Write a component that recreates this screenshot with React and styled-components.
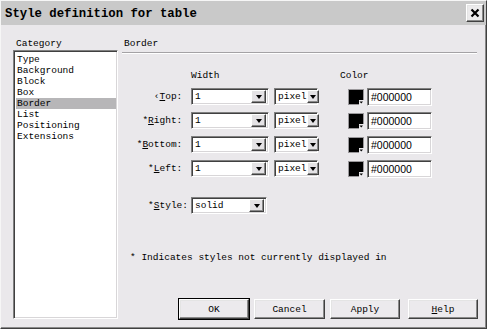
import React from "react";
import styled, { createGlobalStyle, css } from "styled-components";

const Global = createGlobalStyle`
  html, body { margin: 0; padding: 0; background: #eae8eb; }
  body { font-family: "Liberation Mono", "DejaVu Sans Mono", monospace; color: #000; }
  * { box-sizing: border-box; }
`;

const raised = css`
  border-top: 1px solid #ffffff;
  border-left: 1px solid #ffffff;
  border-right: 1px solid #404040;
  border-bottom: 1px solid #404040;
  box-shadow: inset -1px -1px #8a8a8a, inset 1px 1px #e4e4e4;
`;

const sunken = css`
  border-top: 1px solid #808080;
  border-left: 1px solid #808080;
  border-right: 1px solid #ffffff;
  border-bottom: 1px solid #ffffff;
  box-shadow: inset 1px 1px #404040, inset -1px -1px #d8d6d8;
`;

const Window = styled.div`
  width: 487px;
  height: 329px;
  display: flex;
  flex-direction: column;
  background: #eae8eb;
  border-top: 1px solid #f6f6f6;
  border-left: 1px solid #f6f6f6;
  border-right: 1px solid #404040;
  border-bottom: 1px solid #404040;
  box-shadow: inset -1px -1px #8a8a8a;
`;

const TitleBar = styled.div`
  height: 24px;
  flex: none;
  display: flex;
  align-items: center;
  justify-content: space-between;
  padding: 0 2px 0 4px;
  background: #c9c9c9;
`;

const Title = styled.span`
  font-size: 12.3px;
  font-weight: bold;
  padding-top: 1px;
`;

const CloseButton = styled.div`
  width: 18px;
  height: 18px;
  display: flex;
  align-items: center;
  justify-content: center;
  background: #ecebec;
  ${raised};
`;

const Body = styled.div`
  flex: 1;
  display: flex;
  padding: 0 8px 9px 12px;
  min-height: 0;
`;

const LeftCol = styled.div`
  width: 105px;
  display: flex;
  flex-direction: column;
`;

const HeadLabel = styled.div`
  font-size: 9.5px;
  line-height: 11px;
  height: 11px;
  margin-top: 13px;
  padding-left: ${(p) => p.$indent || 0}px;
  white-space: pre;
`;

const ListBox = styled.div`
  flex: 1;
  margin-top: 1px;
  background: #fff;
  padding: 3px 0 0 2px;
  ${sunken};
`;

const ListItem = styled.div`
  font-size: 9.5px;
  line-height: 11px;
  height: 11px;
  padding-left: 1px;
  margin-right: 1px;
  background: ${(p) => (p.$active ? "#b7b6b8" : "transparent")};
`;

const RightCol = styled.div`
  flex: 1;
  margin-left: 4px;
  display: flex;
  flex-direction: column;
`;

const Rule = styled.div`
  height: 2px;
  margin-top: 3px;
  border-top: 1px solid #a4a2a5;
  border-bottom: 1px solid #ffffff;
  margin-right: 1px;
`;

const Grid = styled.div`
  display: grid;
  grid-template-columns: 69px 83px 66px 27px 65px;
  grid-template-rows: 11px;
  grid-auto-rows: 17px;
  row-gap: 7px;
  margin-top: 16px;
  align-items: center;
`;

const ColHead = styled.div`
  font-size: 9.5px;
  line-height: 11px;
  height: 11px;
`;

const FieldLabel = styled.div`
  font-size: 9.5px;
  line-height: 11px;
  text-align: right;
  padding-right: 3px;
  white-space: pre;
  u { text-decoration: underline; text-underline-offset: 1px; }
`;

const Select = styled.div`
  width: ${(p) => p.$w}px;
  height: 17px;
  display: flex;
  align-items: center;
  justify-content: space-between;
  background: #fff;
  padding: 2px 2px 2px 3px;
  font-size: 9.5px;
  ${sunken};
`;

const DropButton = styled.div`
  width: ${(p) => p.$w}px;
  height: 13px;
  flex: none;
  display: flex;
  align-items: center;
  justify-content: center;
  background: #e4e2e5;
  ${raised};
`;

const Arrow = styled.div`
  width: 0;
  height: 0;
  border-left: 3.5px solid transparent;
  border-right: 3.5px solid transparent;
  border-top: 4px solid #000;
`;

const TextField = styled.div`
  width: 65px;
  height: 18px;
  display: flex;
  align-items: center;
  background: #fff;
  padding: 1px 2px 0 3px;
  font-family: "Liberation Sans", Arial, sans-serif;
  font-size: 10.5px;
  ${sunken};
`;

const Swatch = styled.div`
  width: 16px;
  height: 16px;
  margin-left: 8px;
  display: flex;
`;

const StyleRow = styled.div`
  display: flex;
  align-items: center;
  margin-top: 20px;
  height: 17px;
`;

const StyleLabel = styled(FieldLabel)`
  width: 69px;
`;

const Note = styled.div`
  font-size: 9.5px;
  line-height: 11px;
  margin-top: 38px;
  padding-left: 8px;
  white-space: pre;
`;

const Buttons = styled.div`
  margin-top: auto;
  display: flex;
  justify-content: flex-end;
  gap: 5px;
`;

const Button = styled.div`
  width: ${(p) => p.$w || 70}px;
  height: 20px;
  display: flex;
  align-items: center;
  justify-content: center;
  font-size: 9.5px;
  background: #eceaed;
  margin-left: ${(p) => p.$ml || 0}px;
  ${raised};
  ${(p) =>
    p.$default &&
    css`
      outline: 1px solid #000;
      outline-offset: 0;
    `}
  u { text-decoration: underline; text-underline-offset: 1px; }
`;

function Drop({ w, bw, children }) {
  return (
    <Select $w={w}>
      <span>{children}</span>
      <DropButton $w={bw}>
        <Arrow />
      </DropButton>
    </Select>
  );
}

function ColorSwatch() {
  return (
    <Swatch>
      <svg width="16" height="16" viewBox="0 0 16 16">
        <rect x="0" y="0" width="16" height="16" fill="#9a989b" />
        <rect x="1" y="1" width="14" height="14" fill="#000" />
        <rect x="11" y="11" width="5" height="5" fill="#eceaed" />
        <path d="M11.5 12.5 L15 12.5 L13.25 14.5 Z" fill="#000" />
      </svg>
    </Swatch>
  );
}

const rows = [
  { pre: "‹", key: "T", rest: "op: " },
  { pre: "*", key: "R", rest: "ight: " },
  { pre: "*", key: "B", rest: "ottom: " },
  { pre: "*", key: "L", rest: "eft: " },
];

const categories = [
  "Type",
  "Background",
  "Block",
  "Box",
  "Border",
  "List",
  "Positioning",
  "Extensions",
];

export default function App() {
  return (
    <>
      <Global />
      <Window>
        <TitleBar>
          <Title>Style definition for table</Title>
          <CloseButton>
            <svg width="10" height="10" viewBox="0 0 10 10">
              <path d="M1.5 1.5 L8.5 8.5 M8.5 1.5 L1.5 8.5" stroke="#000" strokeWidth="2.2" />
            </svg>
          </CloseButton>
        </TitleBar>
        <Body>
          <LeftCol>
            <HeadLabel $indent={3}>Category</HeadLabel>
            <ListBox>
              {categories.map((c) => (
                <ListItem key={c} $active={c === "Border"}>
                  {c}
                </ListItem>
              ))}
            </ListBox>
          </LeftCol>
          <RightCol>
            <HeadLabel $indent={2}>Border</HeadLabel>
            <Rule />
            <Grid>
              <ColHead />
              <ColHead>Width</ColHead>
              <ColHead />
              <ColHead>Color</ColHead>
              <ColHead />
              {rows.map((r) => (
                <React.Fragment key={r.key}>
                  <FieldLabel>
                    {r.pre}
                    <u>{r.key}</u>
                    {r.rest}
                  </FieldLabel>
                  <Drop w={78} bw={15}>1</Drop>
                  <Drop w={44} bw={12}>pixel</Drop>
                  <ColorSwatch />
                  <TextField>#000000</TextField>
                </React.Fragment>
              ))}
            </Grid>
            <StyleRow>
              <StyleLabel>
                *<u>S</u>tyle: 
              </StyleLabel>
              <Drop w={76} bw={15}>solid</Drop>
            </StyleRow>
            <Note>* Indicates styles not currently displayed in</Note>
            <Buttons>
              <Button $default>OK</Button>
              <Button $w={71}>Cancel</Button>
              <Button>Apply</Button>
              <Button $ml={3}>
                <u>H</u>elp
              </Button>
            </Buttons>
          </RightCol>
        </Body>
      </Window>
    </>
  );
}
